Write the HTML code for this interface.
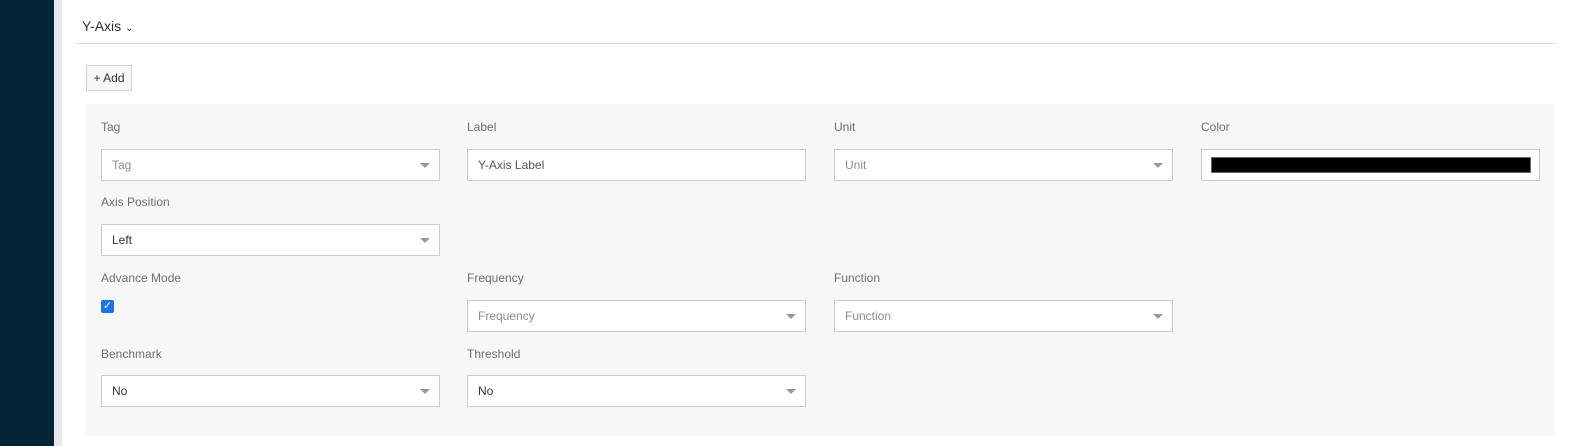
<!DOCTYPE html>
<html><head><style>
body{margin:0;width:1576px;height:446px;background:#fff;font-family:"Liberation Sans",Arial,sans-serif;position:relative;overflow:hidden}
.a{position:absolute}
.lbl{position:absolute;font-size:12px;color:#6b6f75}
.in{position:absolute;width:337px;height:30px;border:1px solid #ccc;background:#fff;box-sizing:content-box;font-size:12px;line-height:30px;text-indent:10px;color:#333}
.ph{color:#8a8d92}
.in.s::after{content:"";position:absolute;right:9px;top:13px;border-left:5px solid transparent;border-right:5px solid transparent;border-top:5px solid #999}
</style></head><body>
<div class="a" style="left:0;top:0;width:54px;height:446px;background:#032536"></div>
<div class="a" style="left:54px;top:0;width:8px;height:446px;background:#e8e9ed"></div>
<div class="a" style="left:82px;top:18px;font-size:14px;color:#333">Y-Axis <span style="font-size:10px">⌄</span></div>
<div class="a" style="left:76px;top:43px;width:1480px;height:1px;background:#ddd"></div>
<div class="a" style="left:86px;top:65px;width:44px;height:24px;border:1px solid #cfd4dc;background:#f7f7f7;font-size:12px;line-height:24px;text-align:center;color:#333">+ Add</div>
<div class="a" style="left:86px;top:104px;width:1468px;height:332px;background:#f7f7f7"></div>

<div class="lbl" style="left:101px;top:120px">Tag</div>
<div class="lbl" style="left:467px;top:120px">Label</div>
<div class="lbl" style="left:834px;top:120px">Unit</div>
<div class="lbl" style="left:1201px;top:120px">Color</div>
<div class="in s ph" style="left:101px;top:149px">Tag</div>
<div class="in" style="left:467px;top:149px;color:#555">Y-Axis Label</div>
<div class="in s ph" style="left:834px;top:149px">Unit</div>
<div class="in" style="left:1201px;top:149px;border-color:#c9c9d6"><div class="a" style="left:9px;top:7px;width:318px;height:14px;background:#000;border:1px solid #666"></div></div>

<div class="lbl" style="left:101px;top:195px">Axis Position</div>
<div class="in s" style="left:101px;top:224px">Left</div>

<div class="lbl" style="left:101px;top:271px">Advance Mode</div>
<div class="lbl" style="left:467px;top:271px">Frequency</div>
<div class="lbl" style="left:834px;top:271px">Function</div>
<div class="a" style="left:101px;top:300px;width:13px;height:13px;background:#1a73e8;border-radius:2px;color:#fff;font-size:11px;line-height:13px;text-align:center">✓</div>
<div class="in s ph" style="left:467px;top:300px">Frequency</div>
<div class="in s ph" style="left:834px;top:300px">Function</div>

<div class="lbl" style="left:101px;top:347px">Benchmark</div>
<div class="lbl" style="left:467px;top:347px">Threshold</div>
<div class="in s" style="left:101px;top:375px">No</div>
<div class="in s" style="left:467px;top:375px">No</div>
</body></html>
